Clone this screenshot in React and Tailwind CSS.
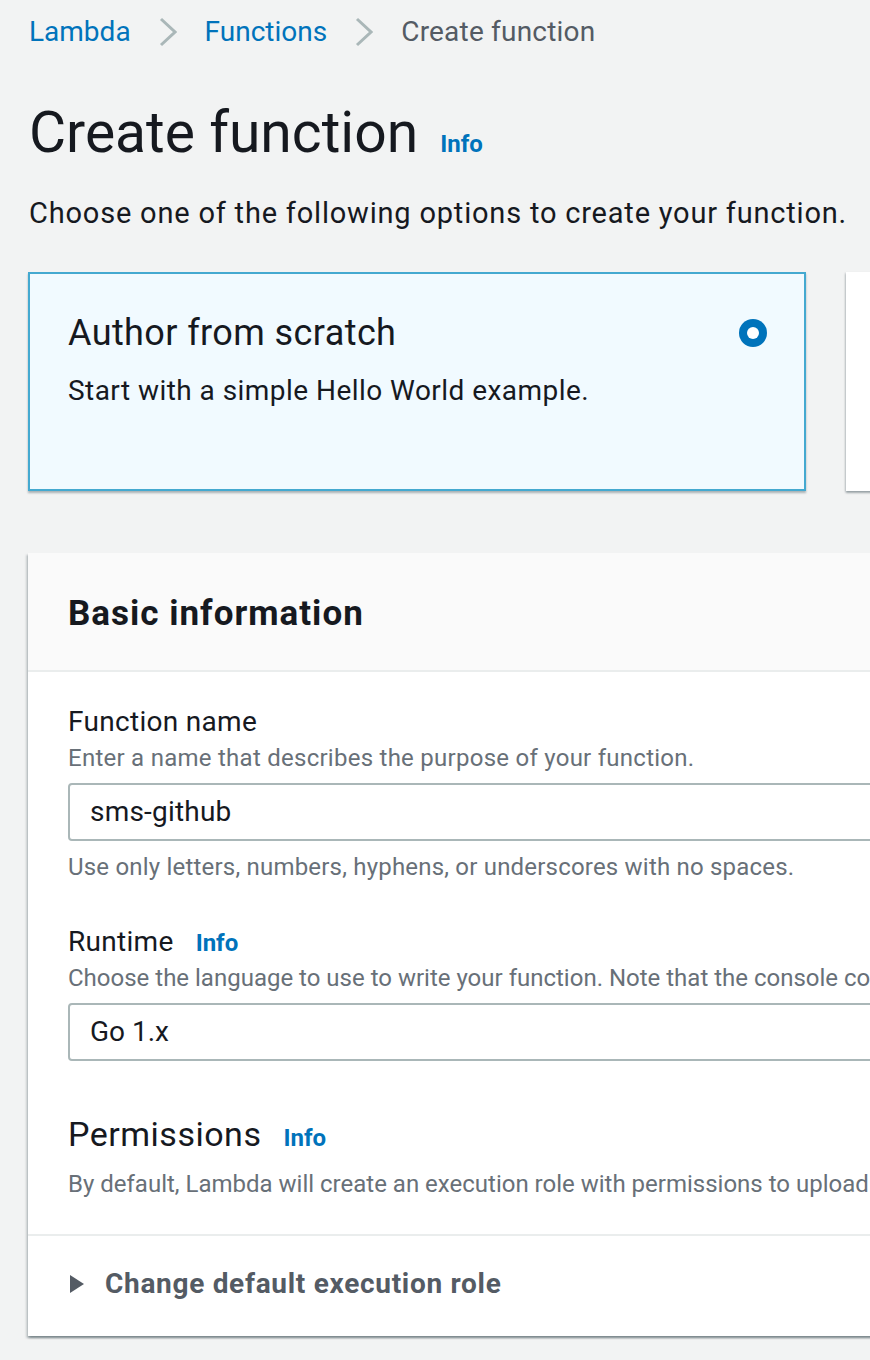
import React from "react";

const font = "font-['Roboto',sans-serif]";

function Chevron() {
  return (
    <svg width="18" height="30" viewBox="0 0 18 30" className="shrink-0">
      <polyline points="2,2 16,15 2,28" fill="none" stroke="#aab7b8" strokeWidth="3" />
    </svg>
  );
}

function Info() {
  return <span className="text-[24px] leading-[32px] font-bold text-[#0073bb]">Info</span>;
}

export default function App() {
  return (
    <div className={`w-[870px] h-[1360px] overflow-hidden bg-[#f2f3f3] ${font} text-[#16191f]`}>
      <div className="pl-[28px]">
        {/* Breadcrumb */}
        <div className="pt-[12px] ml-[1px] flex items-center gap-[28px] text-[28px] leading-[40px]">
          <span className="text-[#0073bb]">Lambda</span>
          <Chevron />
          <span className="text-[#0073bb]">Functions</span>
          <Chevron />
          <span className="text-[#545b64] tracking-[0.2px]">Create function</span>
        </div>

        {/* Title */}
        <div className="mt-[49px] ml-[1px] flex items-baseline gap-[22px]">
          <h1 className="text-[57px] leading-[64px] font-normal">Create function</h1>
          <Info />
        </div>

        <p className="mt-[28px] ml-[1px] text-[29px] leading-[40px] tracking-[0.8px]">
          Choose one of the following options to create your function.
        </p>

        {/* Tiles */}
        <div className="mt-[39px] flex gap-[40px]">
          <div className="w-[778px] h-[219px] shrink-0 border-2 border-[#44a9d0] bg-[#f1faff] shadow-[0_2px_2px_0_rgba(0,28,36,0.3)] pl-[38px] pr-[37px] pt-[37px]">
            <div className="flex items-center justify-between">
              <span className="text-[36px] leading-[44px] tracking-[0.4px]">Author from scratch</span>
              <span className="w-[28px] h-[28px] rounded-full bg-[#0073bb] flex items-center justify-center">
                <span className="w-[12px] h-[12px] rounded-full bg-white" />
              </span>
            </div>
            <p className="mt-[16px] text-[28px] leading-[40px] tracking-[0.45px]">Start with a simple Hello World example.</p>
          </div>
          <div className="w-[300px] h-[219px] shrink-0 bg-white shadow-[0_2px_2px_0_rgba(0,28,36,0.3),-1px_1px_2px_0_rgba(0,28,36,0.15)]" />
        </div>

        {/* Panel */}
        <div className="mt-[62px] w-[900px] bg-white shadow-[0_2px_2px_0_rgba(0,28,36,0.3),2px_2px_2px_0_rgba(0,28,36,0.15),-2px_2px_2px_0_rgba(0,28,36,0.15)]">
          <div className="bg-[#fafafa] border-b-2 border-[#eaeded] pl-[40px] pt-[39px] pb-[34px]">
            <h2 className="text-[35px] leading-[44px] font-bold tracking-[1px]">Basic information</h2>
          </div>

          <div className="pl-[40px] pt-[30px] pb-[34px]">
            <div className="text-[28px] leading-[40px] tracking-[0.3px]">Function name</div>
            <div className="text-[24px] leading-[32px] text-[#687078] tracking-[0.26px]">
              Enter a name that describes the purpose of your function.
            </div>
            <div className="mt-[9px] h-[58px] border-2 border-[#aab7b8] rounded-[4px] flex items-center pl-[20px] text-[28px] leading-[40px] tracking-[0.2px]">
              sms-github
            </div>
            <div className="mt-[10px] text-[24px] leading-[32px] text-[#687078] tracking-[0.2px]">
              Use only letters, numbers, hyphens, or underscores with no spaces.
            </div>

            <div className="mt-[39px] flex items-baseline gap-[22px]">
              <span className="text-[28px] leading-[40px] tracking-[0.3px]">Runtime</span>
              <Info />
            </div>
            <div className="text-[24px] leading-[32px] text-[#687078] whitespace-nowrap">
              Choose the language to use to write your function. Note that the console code editor supports only Node.js, Python, and Ruby.
            </div>
            <div className="mt-[9px] h-[58px] border-2 border-[#aab7b8] rounded-[4px] flex items-center pl-[20px] text-[28px] leading-[40px]">
              Go 1.x
            </div>

            <div className="mt-[53px] flex items-baseline gap-[22px]">
              <span className="text-[34px] leading-[40px] tracking-[0.5px]">Permissions</span>
              <Info />
            </div>
            <div className="mt-[14px] text-[24px] leading-[32px] text-[#687078] whitespace-nowrap">
              By default, Lambda will create an execution role with permissions to upload logs to Amazon CloudWatch Logs.
            </div>
          </div>

          <div className="border-t-2 border-[#eaeded] pl-[41px] pt-[28px] pb-[32px] flex items-center gap-[20px]">
            <svg width="16" height="18" viewBox="0 0 16 18" className="shrink-0">
              <polygon points="1,0 15,9 1,18" fill="#545b64" />
            </svg>
            <span className="text-[28px] leading-[40px] font-bold text-[#545b64] tracking-[0.7px]">Change default execution role</span>
          </div>
        </div>
      </div>
    </div>
  );
}
